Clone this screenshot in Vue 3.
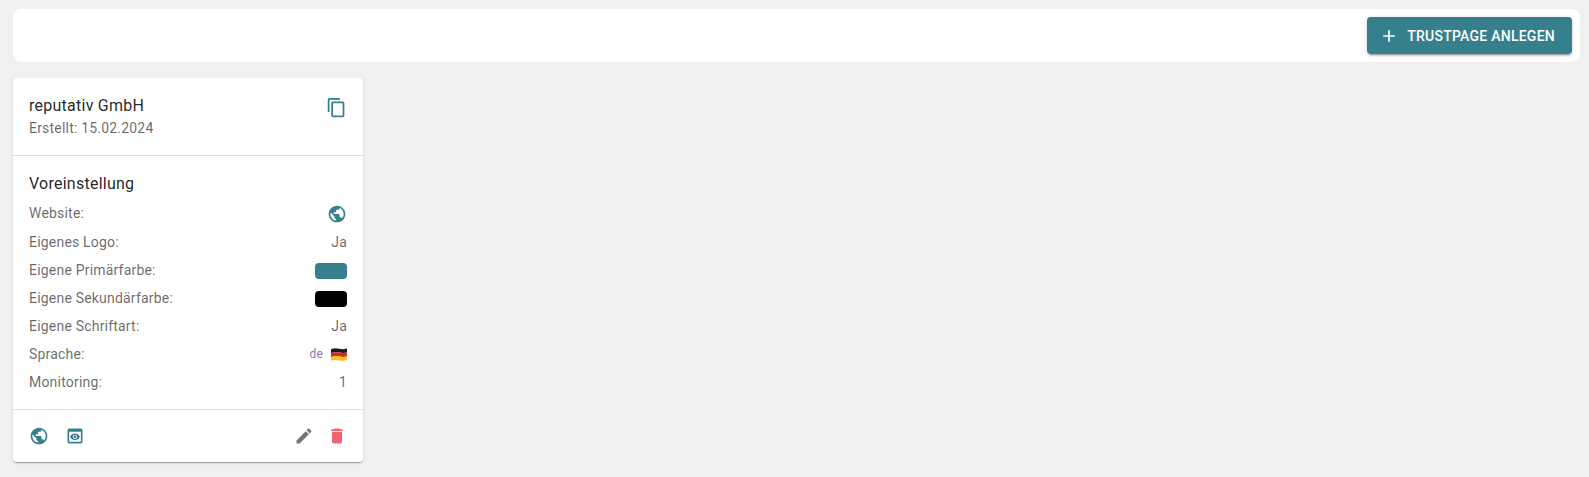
<script setup>
const rows = [
  { label: 'Website:', type: 'globe' },
  { label: 'Eigenes Logo:', type: 'text', value: 'Ja' },
  { label: 'Eigene Primärfarbe:', type: 'color', value: '#367f8c' },
  { label: 'Eigene Sekundärfarbe:', type: 'color', value: '#000000' },
  { label: 'Eigene Schriftart:', type: 'text', value: 'Ja' },
  { label: 'Sprache:', type: 'lang', value: 'de' },
  { label: 'Monitoring:', type: 'text', value: '1' }
]

const globePath = 'M12 2C6.48 2 2 6.48 2 12s4.48 10 10 10 10-4.48 10-10S17.52 2 12 2zm-1 17.93c-3.95-.49-7-3.85-7-7.93 0-.62.08-1.21.21-1.79L9 15v1c0 1.1.9 2 2 2v1.93zm6.9-2.54c-.26-.81-1-1.39-1.9-1.39h-1v-3c0-.55-.45-1-1-1H8v-2h2c.55 0 1-.45 1-1V7h2c1.1 0 2-.9 2-2v-.41c2.93 1.19 5 4.06 5 7.41 0 2.08-.8 3.97-2.1 5.39z'
</script>

<template>
  <div class="page">
    <div class="toolbar">
      <button class="add-btn">
        <svg class="plus" viewBox="0 0 24 24"><path d="M19 13h-6v6h-2v-6H5v-2h6V5h2v6h6v2z" /></svg>
        <span>Trustpage anlegen</span>
      </button>
    </div>

    <div class="card">
      <div class="card-head">
        <div>
          <div class="name">reputativ GmbH</div>
          <div class="created">Erstellt: 15.02.2024</div>
        </div>
        <svg class="icon copy teal" viewBox="0 0 24 24"><path d="M19,21H8V7H19M19,5H8A2,2 0 0,0 6,7V21A2,2 0 0,0 8,23H19A2,2 0 0,0 21,21V7A2,2 0 0,0 19,5M16,1H4A2,2 0 0,0 2,3V17H4V3H16V1Z" /></svg>
      </div>

      <div class="card-body">
        <div class="section-title">Voreinstellung</div>
        <div v-for="row in rows" :key="row.label" class="row">
          <span>{{ row.label }}</span>
          <svg v-if="row.type === 'globe'" class="icon nudge teal" viewBox="0 0 24 24"><path :d="globePath" /></svg>
          <span v-else-if="row.type === 'color'" class="swatch nudge" :style="{ background: row.value }"></span>
          <span v-else-if="row.type === 'lang'" class="lang">
            <span class="lang-code">{{ row.value }}</span>
            <svg class="flag" viewBox="0 0 16 13">
              <path d="M0 1.2C3 0 5 0.2 8 0.8S13 1.4 16 0.4V4.6C13 5.4 11 5 8 4.6S3 4.2 0 5Z" fill="#1f1a1a" />
              <path d="M0 5C3 4.2 5 4.2 8 4.6S13 5.4 16 4.6V8.6C13 9.4 11 9 8 8.6S3 8.2 0 9Z" fill="#dc2a1e" />
              <path d="M0 9C3 8.2 5 8.2 8 8.6S13 9.4 16 8.6V12C13 13 11 13 8 12.4S3 11.6 0 12.6Z" fill="#fcc419" />
            </svg>
          </span>
          <span v-else>{{ row.value }}</span>
        </div>
      </div>

      <div class="card-foot">
        <div class="foot-group left">
          <svg class="icon teal" viewBox="0 0 24 24"><path :d="globePath" /></svg>
          <svg class="icon teal" viewBox="0 0 24 24"><path d="M19 3H5c-1.11 0-2 .9-2 2v14c0 1.1.89 2 2 2h14c1.1 0 2-.9 2-2V5c0-1.1-.89-2-2-2zm0 16H5V7h14v12zm-5.5-6c0 .83-.67 1.5-1.5 1.5s-1.5-.67-1.5-1.5.67-1.5 1.5-1.5 1.5.67 1.5 1.5zM12 9c-2.73 0-5.06 1.66-6 4 .94 2.34 3.27 4 6 4s5.06-1.66 6-4c-.94-2.34-3.27-4-6-4zm0 6.5c-1.38 0-2.5-1.12-2.5-2.5s1.12-2.5 2.5-2.5 2.5 1.12 2.5 2.5-1.12 2.5-2.5 2.5z" /></svg>
        </div>
        <div class="foot-group">
          <svg class="icon grey" viewBox="0 0 24 24"><path d="M20.71,7.04C21.1,6.65 21.1,6 20.71,5.63L18.37,3.29C18,2.9 17.35,2.9 16.96,3.29L15.12,5.12L18.87,8.87M3,17.25V21H6.75L17.81,9.93L14.06,6.18L3,17.25Z" /></svg>
          <svg class="icon red" viewBox="0 0 24 24"><path d="M19,4H15.5L14.5,3H9.5L8.5,4H5V6H19M6,19A2,2 0 0,0 8,21H16A2,2 0 0,0 18,19V7H6V19Z" /></svg>
        </div>
      </div>
    </div>
  </div>
</template>

<style>
html, body {
  margin: 0;
  background: #f0f0f0;
}
</style>

<style scoped>
.page {
  min-height: 477px;
  box-sizing: border-box;
  padding: 9px 9px 9px 13px;
  background: #f0f0f0;
  font-family: Roboto, sans-serif;
  font-size: 14px;
  color: rgba(0, 0, 0, 0.6);
}
.toolbar {
  display: flex;
  justify-content: flex-end;
  padding: 8px;
  background: #fff;
  border-radius: 8px;
}
.add-btn {
  display: flex;
  align-items: center;
  height: 37px;
  padding: 0 17px 0 12px;
  border: 0;
  border-radius: 4px;
  background: #367f8c;
  color: #fff;
  font-family: inherit;
  font-size: 14px;
  font-weight: 500;
  letter-spacing: 0.25px;
  text-transform: uppercase;
  box-shadow: 0 3px 1px -2px rgba(0, 0, 0, 0.2), 0 2px 2px 0 rgba(0, 0, 0, 0.14), 0 1px 5px 0 rgba(0, 0, 0, 0.12);
}
.plus {
  width: 20px;
  height: 20px;
  margin-right: 8px;
  fill: #fff;
}
.card {
  width: 350px;
  margin-top: 16px;
  background: #fff;
  border-radius: 4px;
  box-shadow: 0 2px 1px -1px rgba(0, 0, 0, 0.2), 0 1px 1px 0 rgba(0, 0, 0, 0.14), 0 1px 3px 0 rgba(0, 0, 0, 0.12);
}
.card-head {
  display: flex;
  justify-content: space-between;
  height: 78px;
  box-sizing: border-box;
  padding: 16px;
  border-bottom: 1px solid #dbe4e7;
}
.name,
.section-title {
  font-size: 16px;
  line-height: 24px;
  letter-spacing: 0.25px;
  color: rgba(0, 0, 0, 0.87);
}
.created {
  line-height: 20px;
  letter-spacing: 0.2px;
}
.icon {
  flex: none;
  width: 20px;
  height: 20px;
  fill: currentColor;
}
.copy {
  width: 21px;
  height: 21px;
  margin-top: 3px;
}
.nudge {
  margin-top: 2px;
}
.teal { color: #367f8c; }
.grey { color: #757575; }
.red { color: #ef6472; }
.card-body {
  padding: 16px 16px 13px;
}
.section-title {
  margin-bottom: 3px;
}
.row {
  display: flex;
  justify-content: space-between;
  align-items: center;
  height: 28px;
  letter-spacing: 0.2px;
}
.row:nth-child(3) {
  height: 29px;
}
.swatch {
  width: 32px;
  height: 16px;
  border-radius: 4px;
}
.lang {
  display: flex;
  align-items: center;
  gap: 8px;
}
.lang-code {
  font-size: 12px;
  color: #8a7ba8;
}
.flag {
  width: 16px;
  height: 13px;
}
.card-foot {
  display: flex;
  justify-content: space-between;
  padding: 16px;
  border-top: 1px solid #dbe4e7;
}
.foot-group {
  display: flex;
  gap: 13px;
}
.foot-group.left {
  gap: 16px;
}
</style>
